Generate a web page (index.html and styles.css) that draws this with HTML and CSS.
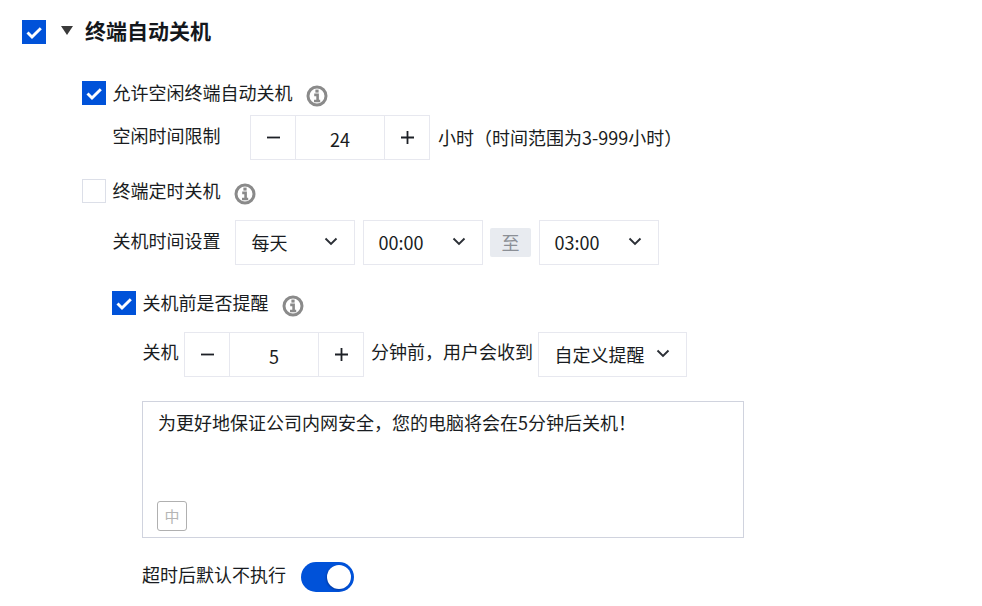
FILE: index.html
```html
<!DOCTYPE html>
<html lang="zh-CN">
<head>
  <meta charset="UTF-8" />
  <title>终端自动关机</title>
  <link rel="stylesheet" href="styles.css">
</head>
<body>
  <div class="panel">
    <div class="head">
      <span class="check on"><svg viewBox="0 0 24 24"><path d="M5.5 12.5L10 17l8.8-8.8"/></svg></span>
      <span class="arrow"></span>
      <h2>终端自动关机</h2>
    </div>

    <div class="row first">
      <span class="check on"><svg viewBox="0 0 24 24"><path d="M5.5 12.5L10 17l8.8-8.8"/></svg></span>
      <span class="label">允许空闲终端自动关机</span>
      <svg class="info" viewBox="0 0 22 22"><circle cx="11" cy="11" r="9"/><rect x="9.4" y="4.6" width="3.2" height="3"/><path d="M8.2 9.9h3.4v5.6M8 16h6.2"/></svg>
    </div>
    <div class="row sub">
      <span class="name">空闲时间限制</span>
      <div class="stepper">
        <span class="step"><svg viewBox="0 0 13 13"><path d="M0 6.5h13"/></svg></span>
        <span class="val">24</span>
        <span class="step"><svg viewBox="0 0 13 13"><path d="M0 6.5h13M6.5 0v13"/></svg></span>
      </div>
      <span class="note">小时（时间范围为3-999小时）</span>
    </div>

    <div class="row third">
      <span class="check"></span>
      <span class="label">终端定时关机</span>
      <svg class="info" viewBox="0 0 22 22"><circle cx="11" cy="11" r="9"/><rect x="9.4" y="4.6" width="3.2" height="3"/><path d="M8.2 9.9h3.4v5.6M8 16h6.2"/></svg>
    </div>
    <div class="row times">
      <span class="name">关机时间设置</span>
      <div class="select"><span>每天</span><svg viewBox="0 0 14 9"><path d="M1.5 1.5L7 7l5.5-5.5"/></svg></div>
      <div class="select"><span class="digits">00:00</span><svg viewBox="0 0 14 9"><path d="M1.5 1.5L7 7l5.5-5.5"/></svg></div>
      <span class="tag">至</span>
      <div class="select"><span class="digits">03:00</span><svg viewBox="0 0 14 9"><path d="M1.5 1.5L7 7l5.5-5.5"/></svg></div>
    </div>

    <div class="inner">
      <div class="row">
        <span class="check on"><svg viewBox="0 0 24 24"><path d="M5.5 12.5L10 17l8.8-8.8"/></svg></span>
        <span class="label">关机前是否提醒</span>
        <svg class="info" viewBox="0 0 22 22"><circle cx="11" cy="11" r="9"/><rect x="9.4" y="4.6" width="3.2" height="3"/><path d="M8.2 9.9h3.4v5.6M8 16h6.2"/></svg>
      </div>
      <div class="row before">
        <span class="name">关机</span>
        <div class="stepper">
          <span class="step"><svg viewBox="0 0 13 13"><path d="M0 6.5h13"/></svg></span>
          <span class="val">5</span>
          <span class="step"><svg viewBox="0 0 13 13"><path d="M0 6.5h13M6.5 0v13"/></svg></span>
        </div>
        <span class="note">分钟前，用户会收到</span>
        <div class="select wide"><span>自定义提醒</span><svg viewBox="0 0 14 9"><path d="M1.5 1.5L7 7l5.5-5.5"/></svg></div>
      </div>
      <div class="message">
        <p>为更好地保证公司内网安全，您的电脑将会在5分钟后关机！</p>
        <span class="lang">中</span>
      </div>
      <div class="row timeout">
        <span class="name">超时后默认不执行</span>
        <span class="switch"><i></i></span>
      </div>
    </div>
  </div>
</body>
</html>
```

FILE: styles.css
```css
html, body {
  height: 100%;
  margin: 0;
  overflow: hidden;
  background: #fff;
}
body {
  font-family: "Noto Sans CJK SC", "Noto Sans", sans-serif;
  font-size: 18px;
  color: #191c21;
}
.panel {
  padding: 20px 0 0 22px;
}
.head {
  display: flex;
  align-items: center;
  height: 24px;
}
.head h2 {
  margin: 0 0 4px 12px;
  font-size: 21px;
  font-weight: 700;
  color: #14171c;
}
.arrow {
  width: 0;
  height: 0;
  margin-left: 15px;
  border-left: 6px solid transparent;
  border-right: 6px solid transparent;
  border-top: 9px solid #3a3a3a;
  margin-bottom: 4px;
}
.check {
  flex: none;
  display: block;
  width: 24px;
  height: 24px;
  box-sizing: border-box;
  border: 1px solid #dcdfe8;
  background: #fff;
}
.check.on {
  border: none;
  background: #0052d9;
}
.check svg {
  display: block;
  width: 24px;
  height: 24px;
}
.check path {
  fill: none;
  stroke: #fff;
  stroke-width: 2.9;
}
.row {
  display: flex;
  align-items: center;
}
.row.first {
  margin: 37px 0 0 60px;
  height: 24px;
}
.label {
  margin: 0 0 2px 6.5px;
  white-space: nowrap;
}
.info {
  width: 22px;
  height: 22px;
  margin-left: 13.5px;
  margin-top: 5px;
  flex: none;
}
.info circle {
  fill: none;
  stroke: #8a8a8a;
  stroke-width: 3;
}
.info rect {
  fill: #8a8a8a;
}
.info path {
  fill: none;
  stroke: #8a8a8a;
  stroke-width: 2.6;
}
.row.sub {
  margin: 10px 0 0 90px;
}
.name {
  white-space: nowrap;
  margin: 0 0 6px 0.5px;
}
.row.sub .name {
  margin-right: 29.5px;
}
.stepper {
  display: flex;
  height: 45px;
  box-sizing: border-box;
  border: 1px solid #e7e8ef;
  flex: none;
}
.step {
  width: 44px;
  display: flex;
  align-items: center;
  justify-content: center;
}
.step svg {
  width: 13px;
  height: 13px;
}
.step path {
  fill: none;
  stroke: #1d2026;
  stroke-width: 1.8;
}
.val {
  width: 88px;
  border-left: 1px solid #e7e8ef;
  border-right: 1px solid #e7e8ef;
  text-align: center;
  line-height: 47px;
}
.note {
  margin: 0 0 2px 8px;
  white-space: nowrap;
}
.row.third {
  margin: 19px 0 0 60px;
  height: 24px;
}
.row.times {
  margin: 17px 0 0 90px;
}
.row.times .name {
  margin-right: 14.5px;
}
.select {
  display: flex;
  align-items: center;
  justify-content: space-between;
  width: 120px;
  height: 45px;
  box-sizing: border-box;
  border: 1px solid #e7e8ef;
  padding: 0 16px 0 15.5px;
  margin-right: 8px;
  flex: none;
}
.select span {
  margin-bottom: 1px;
}
.select .digits {
  margin-left: -1px;
}
.select svg {
  width: 14px;
  height: 9px;
  margin-bottom: 2px;
}
.select path {
  fill: none;
  stroke: #2b2f36;
  stroke-width: 1.9;
}
.select.wide {
  width: 149px;
  margin: 0 0 0 5px;
}
.tag {
  width: 41px;
  height: 29px;
  margin-right: 8px;
  margin-left: -1px;
  border-radius: 2px;
  background: #e8ebf0;
  color: #8b8f96;
  text-align: center;
  line-height: 29px;
}
.inner {
  margin: 26px 0 0 90px;
}
.inner > .row:first-child {
  height: 24px;
}
.row.before {
  margin: 17px 0 0 30px;
}
.row.before .name {
  margin: 0 5.5px 8px 0.5px;
}
.row.before .note {
  margin: 0 0 8px 7px;
}
.message {
  position: relative;
  width: 602px;
  height: 137px;
  margin: 24px 0 0 30px;
  box-sizing: border-box;
  border: 1px solid #d0d3de;
}
.message p {
  margin: 0;
  padding: 5px 15px;
  line-height: 30px;
}
.lang {
  position: absolute;
  left: 14px;
  bottom: 6px;
  width: 30px;
  height: 30px;
  box-sizing: border-box;
  border: 1px solid #b0b0b0;
  border-radius: 3px;
  color: #b5b5b5;
  font-size: 15px;
  text-align: center;
  line-height: 27px;
}
.row.timeout {
  margin: 23px 0 0 30px;
}
.row.timeout .name {
  margin-left: 0;
}
.switch {
  display: block;
  position: relative;
  width: 53px;
  height: 30px;
  margin-left: 15px;
  border-radius: 15px;
  background: #0052d9;
}
.switch i {
  position: absolute;
  right: 3px;
  top: 3px;
  width: 24px;
  height: 24px;
  border-radius: 50%;
  background: #fff;
  box-shadow: -1px 1px 2px rgba(0, 30, 100, 0.4);
}
```
